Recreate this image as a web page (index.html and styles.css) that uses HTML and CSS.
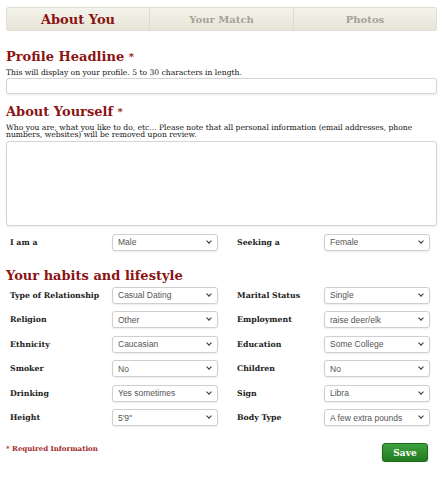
FILE: index.html
```html
<!DOCTYPE html>
<html lang="en">
<head>
	<meta charset="UTF-8">
	<title>Edit Profile - About You</title>
	<link rel="stylesheet" href="styles.css">
</head>
<body>
	<div class="page">
		<ul class="tabs">
			<li class="tab active">About You</li>
			<li class="tab">Your Match</li>
			<li class="tab">Photos</li>
		</ul>

		<form class="profile" action="#">
			<h2>Profile Headline <span class="star">*</span></h2>
			<p class="hint">This will display on your profile. 5 to 30 characters in length.</p>
			<input type="text" class="field-text">

			<h2 class="about">About Yourself <span class="star">*</span></h2>
			<p class="hint">Who you are, what you like to do, etc... Please note that all personal information (email addresses, phone numbers, websites) will be removed upon review.</p>
			<textarea class="field-area"></textarea>

			<div class="grid first">
				<label>I am a</label>
				<span class="pick"><select><option>Male</option></select></span>
				<label>Seeking a</label>
				<span class="pick"><select><option>Female</option></select></span>
			</div>

			<h2 class="habits">Your habits and lifestyle</h2>
			<div class="grid">
				<label>Type of Relationship</label>
				<span class="pick"><select><option>Casual Dating</option></select></span>
				<label>Marital Status</label>
				<span class="pick"><select><option>Single</option></select></span>

				<label>Religion</label>
				<span class="pick"><select><option>Other</option></select></span>
				<label>Employment</label>
				<span class="pick"><select><option>raise deer/elk</option></select></span>

				<label>Ethnicity</label>
				<span class="pick"><select><option>Caucasian</option></select></span>
				<label>Education</label>
				<span class="pick"><select><option>Some College</option></select></span>

				<label>Smoker</label>
				<span class="pick"><select><option>No</option></select></span>
				<label>Children</label>
				<span class="pick"><select><option>No</option></select></span>

				<label>Drinking</label>
				<span class="pick"><select><option>Yes sometimes</option></select></span>
				<label>Sign</label>
				<span class="pick"><select><option>Libra</option></select></span>

				<label>Height</label>
				<span class="pick"><select><option>5'9"</option></select></span>
				<label>Body Type</label>
				<span class="pick"><select><option>A few extra pounds</option></select></span>
			</div>

			<div class="actions">
				<span class="required">* Required Information</span>
				<button type="submit" class="save">Save</button>
			</div>
		</form>
	</div>
</body>
</html>
```

FILE: styles.css
```css
* { margin: 0; padding: 0; box-sizing: border-box; }
body { background: #fff; font-family: "DejaVu Serif", "Liberation Serif", serif; color: #222; }

.page { width: 437px; padding: 7px 0 0 6px; }

/* step tabs */
.tabs { list-style: none; display: grid; grid-template-columns: 142px 144px 1fr; height: 24px;
	background: linear-gradient(#f4f3ec, #e7e5d7); border: 1px solid #e2dfd2; border-radius: 2px; }
.tab { display: flex; align-items: center; justify-content: center; font-size: 10px; font-weight: bold;
	color: #a3a398; border-left: 1px solid #dedbcc; }
.tab:first-child { border-left: 0; }
.tab.active { color: #8a1212; font-size: 13px; }

/* section headings */
.profile h2 { font-size: 13px; line-height: 18px; color: #8b1414; margin-top: 17px; }
.profile h2 .star { font-size: 10px; vertical-align: top; }
.profile h2.about { margin-top: 9px; }
.profile h2.habits { margin-top: 16px; margin-bottom: 2px; }
.hint { font-size: 7.6px; line-height: 7.5px; color: #111; margin: 2.5px 0 2px; }

.field-text, .field-area { display: block; width: 431px; border: 1px solid #d4d4d4; border-radius: 3px;
	background: #fff; box-shadow: 0 1px 2px rgba(0,0,0,.08); }
.field-text { height: 16px; }
.field-area { height: 85px; resize: none; }

/* label / select pairs, two per row */
.grid { display: grid; grid-template-columns: 102px 106px 106px 106px; row-gap: 7.6px;
	padding-left: 4px; align-items: center; }
.grid.first { margin-top: 8px; }
.grid label { font-size: 7.8px; font-weight: bold; color: #222; }
.grid label:nth-child(4n+3) { padding-left: 19px; }

.pick { position: relative; display: block; width: 106px; height: 17px; }
.pick select { appearance: none; -webkit-appearance: none; display: block; width: 100%; height: 100%;
	font-family: "Liberation Sans", Arial, sans-serif; font-size: 8.5px; color: #555; background: #fff;
	border: 1px solid #cfcfcf; border-radius: 3px; padding-left: 5px;
	box-shadow: 0 1px 2px rgba(0,0,0,.08); }
/* small chevron drawn over the select */
.pick::after { content: ""; position: absolute; right: 7px; top: 5px; width: 3px; height: 3px;
	border-right: 1.6px solid #333; border-bottom: 1.6px solid #333; transform: rotate(45deg); pointer-events: none; }

.actions { display: flex; justify-content: space-between; align-items: flex-start; margin-top: 17px; padding-right: 9px; }
.required { font-size: 7px; font-weight: bold; color: #a32a2a; padding-top: 1px; }
.save { width: 46px; height: 19px; border: 1px solid #1d6a1d; border-radius: 3px; color: #fff;
	font-family: "DejaVu Serif", serif; font-size: 9px; font-weight: bold;
	background: linear-gradient(#3fa13f, #1f7a1f); box-shadow: 0 1px 2px rgba(0,0,0,.25); }
```
